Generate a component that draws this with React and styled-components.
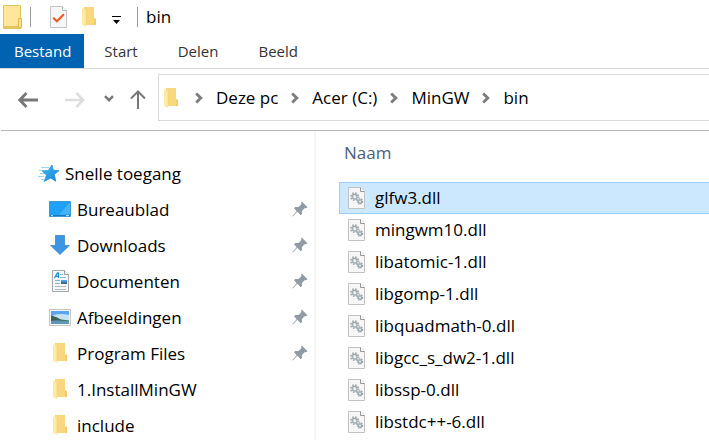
import React from "react";
import styled, { createGlobalStyle } from "styled-components";

const GlobalStyle = createGlobalStyle`
  * { box-sizing: border-box; }
  html, body, #root { height: 100%; }
  body {
    margin: 0;
    overflow: hidden;
    background: #fff;
    color: #000;
    font-family: "Open Sans", "Noto Sans", sans-serif;
    font-size: 17px;
  }
  button { font: inherit; color: inherit; background: none; border: 0; padding: 0; margin: 0; }
  svg { display: block; flex: none; }
`;

const Window = styled.div`
  display: flex;
  flex-direction: column;
  height: 100%;
`;

const TitleBar = styled.header`
  display: flex;
  align-items: center;
  height: 34px;
  padding-left: 2px;
`;

const Divider = styled.span`
  width: 1px;
  height: 20px;
  margin-left: ${(p) => p.$before}px;
  background: #999;
`;

const QuickButton = styled.button`
  && {
    display: flex;
    align-items: center;
    justify-content: center;
    width: ${(p) => p.$width}px;
    height: 24px;
    margin-left: ${(p) => p.$before}px;
  }
`;

const Title = styled.h1`
  margin: 0 0 0 8px;
  font-size: 17px;
  font-weight: 400;
  line-height: 24px;
`;

const Tabs = styled.nav`
  display: flex;
  height: 35px;
  border-bottom: 1px solid #dadada;
`;

const Tab = styled.button`
  && {
    height: 34px;
    padding: ${(p) => (p.$active ? "0 13px 0 14px" : "0 20px")};
    font-size: 15px;
    color: ${(p) => (p.$active ? "#fff" : "#333")};
    background: ${(p) => (p.$active ? "#0063b1" : "transparent")};
  }
`;

const NavBar = styled.div`
  display: flex;
  align-items: center;
  height: 62px;
  margin-left: 1px;
  padding: 5px 0 5px 17px;
  border-bottom: 1px solid #b9b9b9;
`;

const NavButton = styled.button`
  && {
    display: flex;
    margin-right: ${(p) => p.$after}px;
  }
`;

const AddressBar = styled.div`
  display: flex;
  align-items: center;
  flex: 1;
  height: 47px;
  padding-left: 5px;
  margin-bottom: 4px;
  border: 1px solid #d9d9d9;
  border-right: 0;
  white-space: nowrap;
`;

const Crumbs = styled.ol`
  display: flex;
  align-items: center;
  gap: 13px;
  margin: 0 0 0 17px;
  padding: 0;
  list-style: none;
`;

const Crumb = styled.li`
  display: flex;
  align-items: center;
  gap: 13px;
`;

const Body = styled.div`
  display: flex;
  flex: 1;
  min-height: 0;
`;

const Sidebar = styled.aside`
  flex: none;
  width: 316px;
  padding: 24px 6px 0 0;
  overflow: hidden;
  border-right: 2px solid #f5f5f5;
`;

const SideItem = styled.button`
  && {
    display: flex;
    align-items: center;
    width: 100%;
    height: 36px;
    padding-left: ${(p) => (p.$root ? 38 : 49)}px;
    gap: ${(p) => (p.$root ? 5 : 6)}px;
  }
`;

const IconSlot = styled.span`
  display: flex;
  justify-content: center;
  width: 22px;
`;

const SideLabel = styled.span`
  flex: 1;
  text-align: left;
  white-space: nowrap;
`;

const Files = styled.main`
  flex: 1;
  min-width: 0;
  overflow: hidden;
  padding-left: 23px;
`;

const FileTable = styled.table`
  width: 100%;
  border-collapse: separate;
  border-spacing: 0;

  th {
    height: 51px;
    padding: 0 0 9px 5px;
    text-align: left;
    font-weight: 400;
    color: #4c607a;
  }
`;

const FileCell = styled.td`
  height: 32px;
  padding: 0 0 0 8px;
  border: 1px solid ${(p) => (p.$selected ? "#99d1ff" : "transparent")};
  border-right: 0;
  background: ${(p) => (p.$selected ? "#cce8ff" : "transparent")};
`;

const FileName = styled.div`
  display: flex;
  align-items: center;
  gap: 10px;
  line-height: 30px;
  white-space: nowrap;
`;

const FolderIcon = () => (
  <svg width="14" height="20" viewBox="0 0 14 20">
    <path d="M2 0h10v11l2 1v6H2z" fill="#f8d77e" />
    <path d="M12 11.5l2 .5v6h-2z" fill="#f2cc6a" />
    <path d="M0 1l4 2.2V20l-4-2z" fill="#ffe9a6" />
    <path d="M4 3.2V18" stroke="#f3ce70" strokeWidth=".5" />
  </svg>
);

const BigFolderIcon = () => (
  <svg width="20" height="24" viewBox="0 0 20 24">
    <path d="M1.5.5h17v23h-17z" fill="#ffe699" stroke="#e2c35c" />
    <path d="M2 21h17v2.5H2z" fill="#e6c65b" />
    <path d="M16.5 13.5h3v9h-3z" fill="#ffe28a" stroke="#dcb948" />
  </svg>
);

const CheckPageIcon = () => (
  <svg width="17" height="22" viewBox="0 0 17 22">
    <path d="M.5.5h12l4 4v17H.5z" fill="#f5f6f8" stroke="#c0c4c7" />
    <path d="M12.5.5v4h4" fill="#fff" stroke="#b6babd" />
    <path d="M3.2 11.8l3.7 3.5 7-7" fill="none" stroke="#f05a24" strokeWidth="2.2" />
  </svg>
);

const MenuArrowIcon = () => (
  <svg width="9" height="15" viewBox="0 0 9 15" fill="#000">
    <path d="M0 6h9v1H0zM1 10h7l-3.5 4z" />
  </svg>
);

const BackIcon = ({ color }) => (
  <svg width="20" height="16" viewBox="0 0 20 16" fill="none" stroke={color} strokeWidth="2.8">
    <path d="M20 8H2M8.5 1L1.8 8l6.7 7" />
  </svg>
);

const ForwardIcon = ({ color }) => (
  <svg width="20" height="16" viewBox="0 0 20 16" fill="none" stroke={color} strokeWidth="2.6">
    <path d="M0 8h18M11.5 1l6.7 7-6.7 7" />
  </svg>
);

const RecentIcon = () => (
  <svg width="10" height="9" viewBox="0 0 10 9" fill="none" stroke="#777" strokeWidth="2.4">
    <path d="M1 1.2l4 4 4-4" />
  </svg>
);

const UpIcon = () => (
  <svg width="17" height="20" viewBox="0 0 17 20" fill="none" stroke="#777" strokeWidth="2">
    <path d="M8 19V2M1 8.5L8 1.5l7 7" />
  </svg>
);

const ChevronIcon = () => (
  <svg width="8" height="12" viewBox="0 0 8 12" fill="none" stroke="#7d7d7d" strokeWidth="2.9">
    <path d="M1.2 1.5L5.8 6l-4.6 4.5" />
  </svg>
);

const StarIcon = () => (
  <svg width="22" height="19" viewBox="0 0 22 19">
    <defs>
      <linearGradient id="star" x1="0" y1="0" x2="1" y2="1">
        <stop offset="0" stopColor="#41b9f7" />
        <stop offset="1" stopColor="#1583d8" />
      </linearGradient>
    </defs>
    <path d="M3 3.5h8M1 6.5h8M2 9.5h7M0 12.5h6M3 15.5h3" stroke="#9bd6f6" />
    <path
      d="M14 1l1.3 5.2 5.7.5-4.7 3.6 1.5 7-5.1-3.3-6.5 3.6 2.3-6.5-4.2-4 5.8-.4z"
      fill="url(#star)"
      stroke="#1b86cf"
      strokeWidth=".7"
    />
  </svg>
);

const DesktopIcon = () => (
  <svg width="22" height="16" viewBox="0 0 22 16">
    <path d="M.5.5h21v15H.5z" fill="#1ea1f7" stroke="#3e96d2" />
    <path d="M21 1v12L10 14z" fill="#43b3fb" />
    <path d="M1 14.5h20" stroke="#147ac7" />
    <path d="M2 14.5h2M17 14.5h3" stroke="#a9dcff" />
  </svg>
);

const DownloadIcon = () => (
  <svg width="20" height="20" viewBox="0 0 20 20">
    <path d="M5.5.5h9v10h4.8L10 19.5.7 10.5h4.8z" fill="#3c96e3" stroke="#2c7ec8" strokeWidth=".7" />
  </svg>
);

const DocumentIcon = () => (
  <svg width="17" height="22" viewBox="0 0 17 22">
    <path d="M.5.5h12l4 4v17H.5z" fill="#f5f7f9" stroke="#a4a9ac" />
    <path d="M12.5.5v4h4" fill="#fff" stroke="#979da1" />
    <path d="M2.5 8l3-5h1v5M4 6.3h2.5" fill="none" stroke="#2293d2" strokeWidth="1.3" />
    <path d="M8 4.5h3M8 7.5h6M3 10.5h5M3 13.5h5" stroke="#80bade" />
    <path d="M9 10h6v4H9z" fill="#3e6e8b" />
    <path d="M9 10h6v1.8H9z" fill="#4aa3ec" />
    <path d="M3 16.5h11M3 19.5h11" stroke="#b2b9bd" />
  </svg>
);

const PictureIcon = () => (
  <svg width="22" height="17" viewBox="0 0 22 17">
    <path d="M.5.5h21v16H.5z" fill="#f5f5f5" stroke="#c6c6c6" />
    <path d="M2 2h18v13H2z" fill="#5ba5f1" />
    <path d="M2 8c5-4 12-3 18-2v6H2z" fill="#c4e2f0" />
    <path d="M2 6.5l5 1.5 5 2.5 8 1V13H2z" fill="#3b6356" />
    <path d="M2 12c6-1 12 0 18 0v3H2z" fill="#5e98b4" />
  </svg>
);

const PinIcon = () => (
  <svg width="16" height="16" viewBox="0 0 16 16">
    <path d="M9.7.5l5.8 5.8-1.6 1-1-.4-3 3 .1 3.1-1.3 1.2-3.4-3.4L.8 15.5l-.5-.6 4.4-4.7L2 7.3 3.3 6l3.2.1 3-3-.5-1.2z" fill="#909ba3" />
  </svg>
);

const DllIcon = () => (
  <svg width="17" height="22" viewBox="0 0 17 22">
    <path d="M.5.5h12l4 4v17H.5z" fill="#f6f6f6" stroke="#c2c2c2" />
    <path d="M12.5.5v4h4" fill="#fff" stroke="#989898" />
    <g fill="none">
      <circle cx="6.7" cy="9.7" r="3.6" stroke="#a2adb3" strokeWidth="2" strokeDasharray="1.5 1.33" />
      <circle cx="6.7" cy="9.7" r="2.3" stroke="#a5b0b6" strokeWidth="1.6" />
      <circle cx="12" cy="14.4" r="2.4" stroke="#8d9aa2" strokeWidth="1.6" strokeDasharray="1.1 .78" />
      <circle cx="12" cy="14.4" r="1.5" stroke="#9ba8af" strokeWidth="1.2" />
    </g>
  </svg>
);

const places = [
  { label: "Bureaublad", Icon: DesktopIcon, pinned: true },
  { label: "Downloads", Icon: DownloadIcon, pinned: true },
  { label: "Documenten", Icon: DocumentIcon, pinned: true },
  { label: "Afbeeldingen", Icon: PictureIcon, pinned: true },
  { label: "Program Files", Icon: FolderIcon, pinned: true },
  { label: "1.InstallMinGW", Icon: FolderIcon },
  { label: "include", Icon: FolderIcon },
];

const files = [
  "glfw3.dll",
  "mingwm10.dll",
  "libatomic-1.dll",
  "libgomp-1.dll",
  "libquadmath-0.dll",
  "libgcc_s_dw2-1.dll",
  "libssp-0.dll",
  "libstdc++-6.dll",
];

export default function App() {
  return (
    <Window>
      <GlobalStyle />
      <TitleBar>
        <BigFolderIcon />
        <Divider $before={8} />
        <QuickButton $before={19} $width={17} aria-label="Eigenschappen"><CheckPageIcon /></QuickButton>
        <QuickButton $before={15} $width={14} aria-label="Nieuwe map"><FolderIcon /></QuickButton>
        <QuickButton $before={16} $width={9} aria-label="Werkbalk aanpassen"><MenuArrowIcon /></QuickButton>
        <Divider $before={16} />
        <Title>bin</Title>
      </TitleBar>
      <Tabs>
        <Tab $active>Bestand</Tab>
        <Tab>Start</Tab>
        <Tab>Delen</Tab>
        <Tab>Beeld</Tab>
      </Tabs>
      <NavBar>
        <NavButton $after={27} aria-label="Terug"><BackIcon color="#777" /></NavButton>
        <NavButton $after={19} aria-label="Vooruit" disabled><ForwardIcon color="#dedede" /></NavButton>
        <NavButton $after={16} aria-label="Recente locaties"><RecentIcon /></NavButton>
        <NavButton $after={11} aria-label="Omhoog"><UpIcon /></NavButton>
        <AddressBar>
          <FolderIcon />
          <Crumbs>
            {["Deze pc", "Acer (C:)", "MinGW", "bin"].map((name) => (
              <Crumb key={name}>
                <ChevronIcon />
                <button>{name}</button>
              </Crumb>
            ))}
          </Crumbs>
        </AddressBar>
      </NavBar>
      <Body>
        <Sidebar>
          <SideItem $root>
            <IconSlot><StarIcon /></IconSlot>
            <SideLabel>Snelle toegang</SideLabel>
          </SideItem>
          {places.map(({ label, Icon, pinned }) => (
            <SideItem key={label}>
              <IconSlot><Icon /></IconSlot>
              <SideLabel>{label}</SideLabel>
              {pinned && <PinIcon />}
            </SideItem>
          ))}
        </Sidebar>
        <Files>
          <FileTable>
            <thead>
              <tr><th scope="col">Naam</th></tr>
            </thead>
            <tbody>
              {files.map((name, i) => (
                <tr key={name}>
                  <FileCell $selected={i === 0}>
                    <FileName><DllIcon />{name}</FileName>
                  </FileCell>
                </tr>
              ))}
            </tbody>
          </FileTable>
        </Files>
      </Body>
    </Window>
  );
}
